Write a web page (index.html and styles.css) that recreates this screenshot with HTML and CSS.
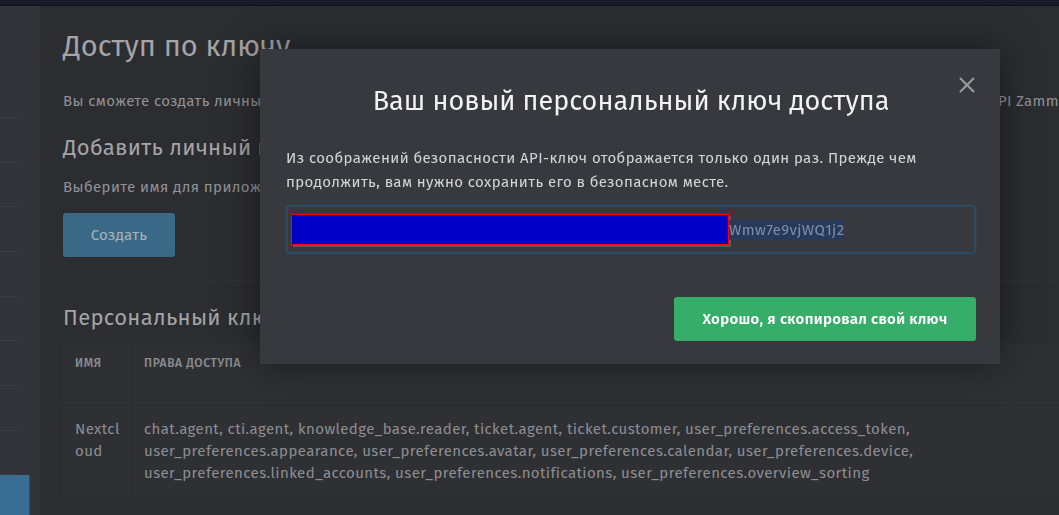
FILE: index.html
```html
<!DOCTYPE html>
<html lang="ru">
    <head>
        <meta charset="UTF-8" />
        <meta name="viewport" content="width=device-width, initial-scale=1.0" />
        <title>Доступ по ключу</title>
        <link rel="stylesheet" href="styles.css">
    </head>
    <body>
        <div class="topbar"></div>
        <div class="layout">
            <div class="sidebar">
                <div class="side-head"></div>
                <div class="side-item"></div>
                <div class="side-item"></div>
                <div class="side-item"></div>
                <div class="side-item"></div>
                <div class="side-item"></div>
                <div class="side-item"></div>
                <div class="side-item"></div>
                <div class="side-item"></div>
                <div class="side-item"></div>
                <div class="side-item active"></div>
            </div>
            <div class="content">
                <h1>Доступ по ключу</h1>
                <p class="lead lead-first">Вы сможете создать личный ключ доступа, чтобы использовать его для авторизации сторонних приложений, работающих с API Zammad.</p>
                <h2 class="add-title">Добавить личный ключ доступа</h2>
                <p class="lead lead-second">Выберите имя для приложения и права доступа.</p>
                <button class="button create-button">Создать</button>
                <hr class="divider" />
                <h2 class="list-title">Персональный ключ доступа</h2>
                <table class="token-table">
                    <thead>
                        <tr>
                            <th class="col-name">Имя</th>
                            <th>Права доступа</th>
                        </tr>
                    </thead>
                    <tbody>
                        <tr>
                            <td class="col-name">Nextcloud</td>
                            <td>chat.agent, cti.agent, knowledge_base.reader, ticket.agent, ticket.customer, user_preferences.access_token,<br>user_preferences.appearance, user_preferences.avatar, user_preferences.calendar, user_preferences.device,<br>user_preferences.linked_accounts, user_preferences.notifications, user_preferences.overview_sorting</td>
                        </tr>
                    </tbody>
                </table>
            </div>
        </div>

        <!-- модальное окно с новым ключом -->
        <div class="modal">
            <button class="modal-close" aria-label="Закрыть">
                <svg width="18" height="18" viewBox="0 0 18 18">
                    <path d="M2 2 L16 16 M16 2 L2 16" stroke="#9b9ca0" stroke-width="2" fill="none" />
                </svg>
            </button>
            <h3 class="modal-title">Ваш новый персональный ключ доступа</h3>
            <p class="modal-text">Из соображений безопасности API-ключ отображается только один раз. Прежде чем<br>продолжить, вам нужно сохранить его в безопасном месте.</p>
            <div class="key-field">
                <span class="redacted"></span><span class="key-text">Wmw7e9vjWQ1j2</span>
            </div>
            <div class="modal-footer">
                <button class="button ok-button">Хорошо, я скопировал свой ключ</button>
            </div>
        </div>
    </body>
</html>
```

FILE: styles.css
```css
body {
    margin: 0;
    font-family: "Fira Sans", "Noto Sans", sans-serif;
    background-color: #2c2d31;
    overflow: hidden;
    height: 515px;
}
.topbar {
    height: 5px;
    background-color: #181c28;
    border-bottom: 1px solid #101218;
}
.layout {
    display: flex;
    height: 509px;
}
.sidebar {
    width: 40px;
    flex-shrink: 0;
    background-color: #323439;
    display: flex;
    flex-direction: column;
}
.side-head {
    height: 68px;
}
.side-item {
    height: 44px;
    width: 18px;
    border-bottom: 1px solid #3b3d42;
}
.side-item.active {
    width: 29px;
    height: 40px;
    border-bottom: none;
    border-right: 1px solid #2f4f6a;
    background-color: #3a6d93;
}
.content {
    flex: 1;
    padding: 23px 0 0 23px;
    white-space: nowrap;
    overflow: hidden;
    color: #9a9b9e;
}
h1 {
    margin: 0;
    font-size: 29px;
    line-height: 36px;
    font-weight: 400;
    color: #a3a4a7;
}
h2 {
    margin: 0;
    font-size: 22px;
    line-height: 28px;
    font-weight: 400;
    letter-spacing: 0.3px;
    color: #a3a4a7;
}
.lead {
    font-size: 15px;
    line-height: 20px;
    letter-spacing: 0.4px;
    margin: 0;
    color: #919296;
}
.lead-first {
    margin-top: 26px;
    letter-spacing: 0.36px;
}
.add-title {
    margin-top: 23px;
}
.lead-second {
    margin-top: 15px;
}
.button {
    font-family: inherit;
    border: none;
    border-radius: 3px;
    cursor: pointer;
}
.create-button {
    display: block;
    margin-top: 16px;
    width: 112px;
    height: 44px;
    font-size: 15px;
    letter-spacing: 0.3px;
    background-color: #3a6987;
    color: #a7b2ba;
}
.divider {
    border: none;
    border-top: 1px solid #313236;
    margin: 23px 0 0;
}
.list-title {
    margin-top: 23px;
}
.token-table {
    margin-top: 11px;
    border-collapse: collapse;
    width: 1100px;
    background-color: #2f3034;
    font-size: 15px;
    letter-spacing: 0.4px;
}
.token-table th {
    text-align: left;
    font-weight: 500;
    font-size: 12px;
    line-height: 16px;
    text-transform: uppercase;
    letter-spacing: 0.6px;
    color: #8c8d91;
    height: 42px;
    vertical-align: top;
    padding: 12px 12px 8px;
}
.token-table td {
    padding: 12px 12px 13px;
    line-height: 22px;
    color: #8d8e92;
    vertical-align: top;
    white-space: normal;
    border-top: 1px solid #2a2b2f;
}
.token-table .col-name {
    width: 52px;
    padding-right: 4px;
    word-break: break-all;
    border-right: 1px solid #2a2b2f;
}
.modal {
    position: fixed;
    left: 260px;
    top: 49px;
    width: 740px;
    height: 315px;
    box-sizing: border-box;
    padding: 0 24px 0 26px;
    background-color: #38393e;
    box-shadow: 0 0 40px rgba(0, 0, 0, 0.45);
}
.modal-close {
    position: absolute;
    right: 24px;
    top: 27px;
    background: none;
    border: none;
    padding: 0;
    cursor: pointer;
}
.modal-title {
    margin: 34px 0 0;
    text-align: center;
    font-size: 27px;
    line-height: 36px;
    font-weight: 400;
    color: #f3f3f4;
}
.modal-text {
    margin: 27px 0 11px;
    font-size: 15px;
    line-height: 24px;
    letter-spacing: 0.4px;
    color: #d4d5d7;
}
.key-field {
    height: 45px;
    border: 2px solid #2d4a63;
    border-radius: 4px;
    box-shadow: 0 0 2px rgba(60, 100, 140, 0.5);
    display: flex;
    align-items: center;
    padding-left: 3px;
}
.redacted {
    width: 436px;
    height: 29px;
    background-color: #0000c8;
    border: 1px solid #ff0000;
    box-shadow: 2px 2px 0 #58595d;
}
.key-text {
    font-size: 15px;
    letter-spacing: 0.4px;
    color: #7f8ca5;
    background-color: #283a5c;
    padding: 1px 0;
}
.modal-footer {
    display: flex;
    justify-content: flex-end;
    margin-top: 43px;
}
.ok-button {
    width: 302px;
    height: 44px;
    font-size: 15px;
    letter-spacing: 0.3px;
    background-color: #36ad69;
    color: #ffffff;
    font-weight: 600;
}
```
